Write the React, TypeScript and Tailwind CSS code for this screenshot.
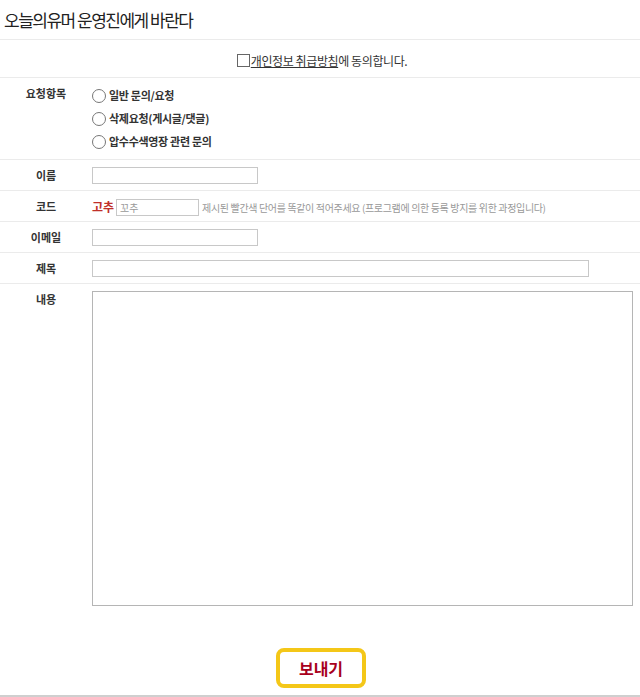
import React from 'react';

const font = { fontFamily: '"Noto Sans CJK KR", "Noto Sans", sans-serif' };

function Row({ label, children, className = '' }: { label: string; children: React.ReactNode; className?: string }) {
  return (
    <div className={`flex border-b border-[#ebebeb] ${className}`}>
      <div className="w-[92px] shrink-0 text-center text-[11px] font-bold text-[#333] pt-[7px]">{label}</div>
      <div className="flex-1 min-w-0">{children}</div>
    </div>
  );
}

function Radio({ label }: { label: string }) {
  return (
    <label className="flex items-center h-[23px] text-[11px] font-bold text-[#333] tracking-[-0.3px]">
      <span className="w-[14px] h-[14px] rounded-full border border-[#777] bg-white mr-[3px]" />
      {label}
    </label>
  );
}

export default function App() {
  return (
    <div className="w-[640px] h-[697px] bg-white overflow-hidden flex flex-col" style={font}>
      <div className="h-[40px] border-b border-[#ebebeb] pl-[4px] flex items-center">
        <h1 className="text-[17px] text-[#222] tracking-[-1.5px] font-normal">오늘의유머 운영진에게 바란다</h1>
      </div>

      <div className="h-[38px] border-b border-[#ebebeb] flex items-center justify-center pt-[4px] text-[12px] text-[#333] tracking-[-0.4px] pl-[4px]">
        <span className="w-[13px] h-[13px] border border-[#666] bg-white mr-[1px]" />
        <span className="underline">개인정보 취급방침</span>
        <span>에 동의합니다.</span>
      </div>

      <Row label="요청항목" className="h-[82px]">
        <div className="pt-[6px]">
          <Radio label="일반 문의/요청" />
          <Radio label="삭제요청(게시글/댓글)" />
          <Radio label="압수수색영장 관련 문의" />
        </div>
      </Row>

      <Row label="이름" className="h-[31px]">
        <div className="pt-[7px]">
          <div className="w-[166px] h-[17px] border border-[#c8c8c8] bg-white" />
        </div>
      </Row>

      <Row label="코드" className="h-[31px]">
        <div className="pt-[7px] flex items-center">
          <span className="text-[12px] font-bold text-[#c0302a] mr-[2px]">고추</span>
          <div className="w-[83px] h-[17px] border border-[#c8c8c8] bg-white text-[10px] text-[#999] pl-[3px] leading-[15px]">꼬추</div>
          <span className="ml-[3px] text-[10px] text-[#999] tracking-[-0.35px] whitespace-nowrap">
            제시된 빨간색 단어를 똑같이 적어주세요 (프로그램에 의한 등록 방지를 위한 과정입니다)
          </span>
        </div>
      </Row>

      <Row label="이메일" className="h-[31px]">
        <div className="pt-[7px]">
          <div className="w-[166px] h-[17px] border border-[#c8c8c8] bg-white" />
        </div>
      </Row>

      <Row label="제목" className="h-[31px]">
        <div className="pt-[7px]">
          <div className="w-[497px] h-[17px] border border-[#c8c8c8] bg-white" />
        </div>
      </Row>

      <div className="flex flex-1 border-b-2 border-[#cfcfcf]">
        <div className="w-[92px] shrink-0 text-center text-[11px] font-bold text-[#333] pt-[7px]">내용</div>
        <div className="flex-1 flex flex-col">
          <div className="mt-[7px] w-[541px] h-[315px] border border-[#b5b5b5] bg-white" />
          <div className="flex-1 flex items-end justify-center pb-[7px] -ml-[92px]">
            <button className="w-[90px] h-[40px] rounded-[8px] border-4 border-[#f4c718] bg-white text-[16px] font-bold text-[#a8001c] ml-[2px]">
              보내기
            </button>
          </div>
        </div>
      </div>
    </div>
  );
}
